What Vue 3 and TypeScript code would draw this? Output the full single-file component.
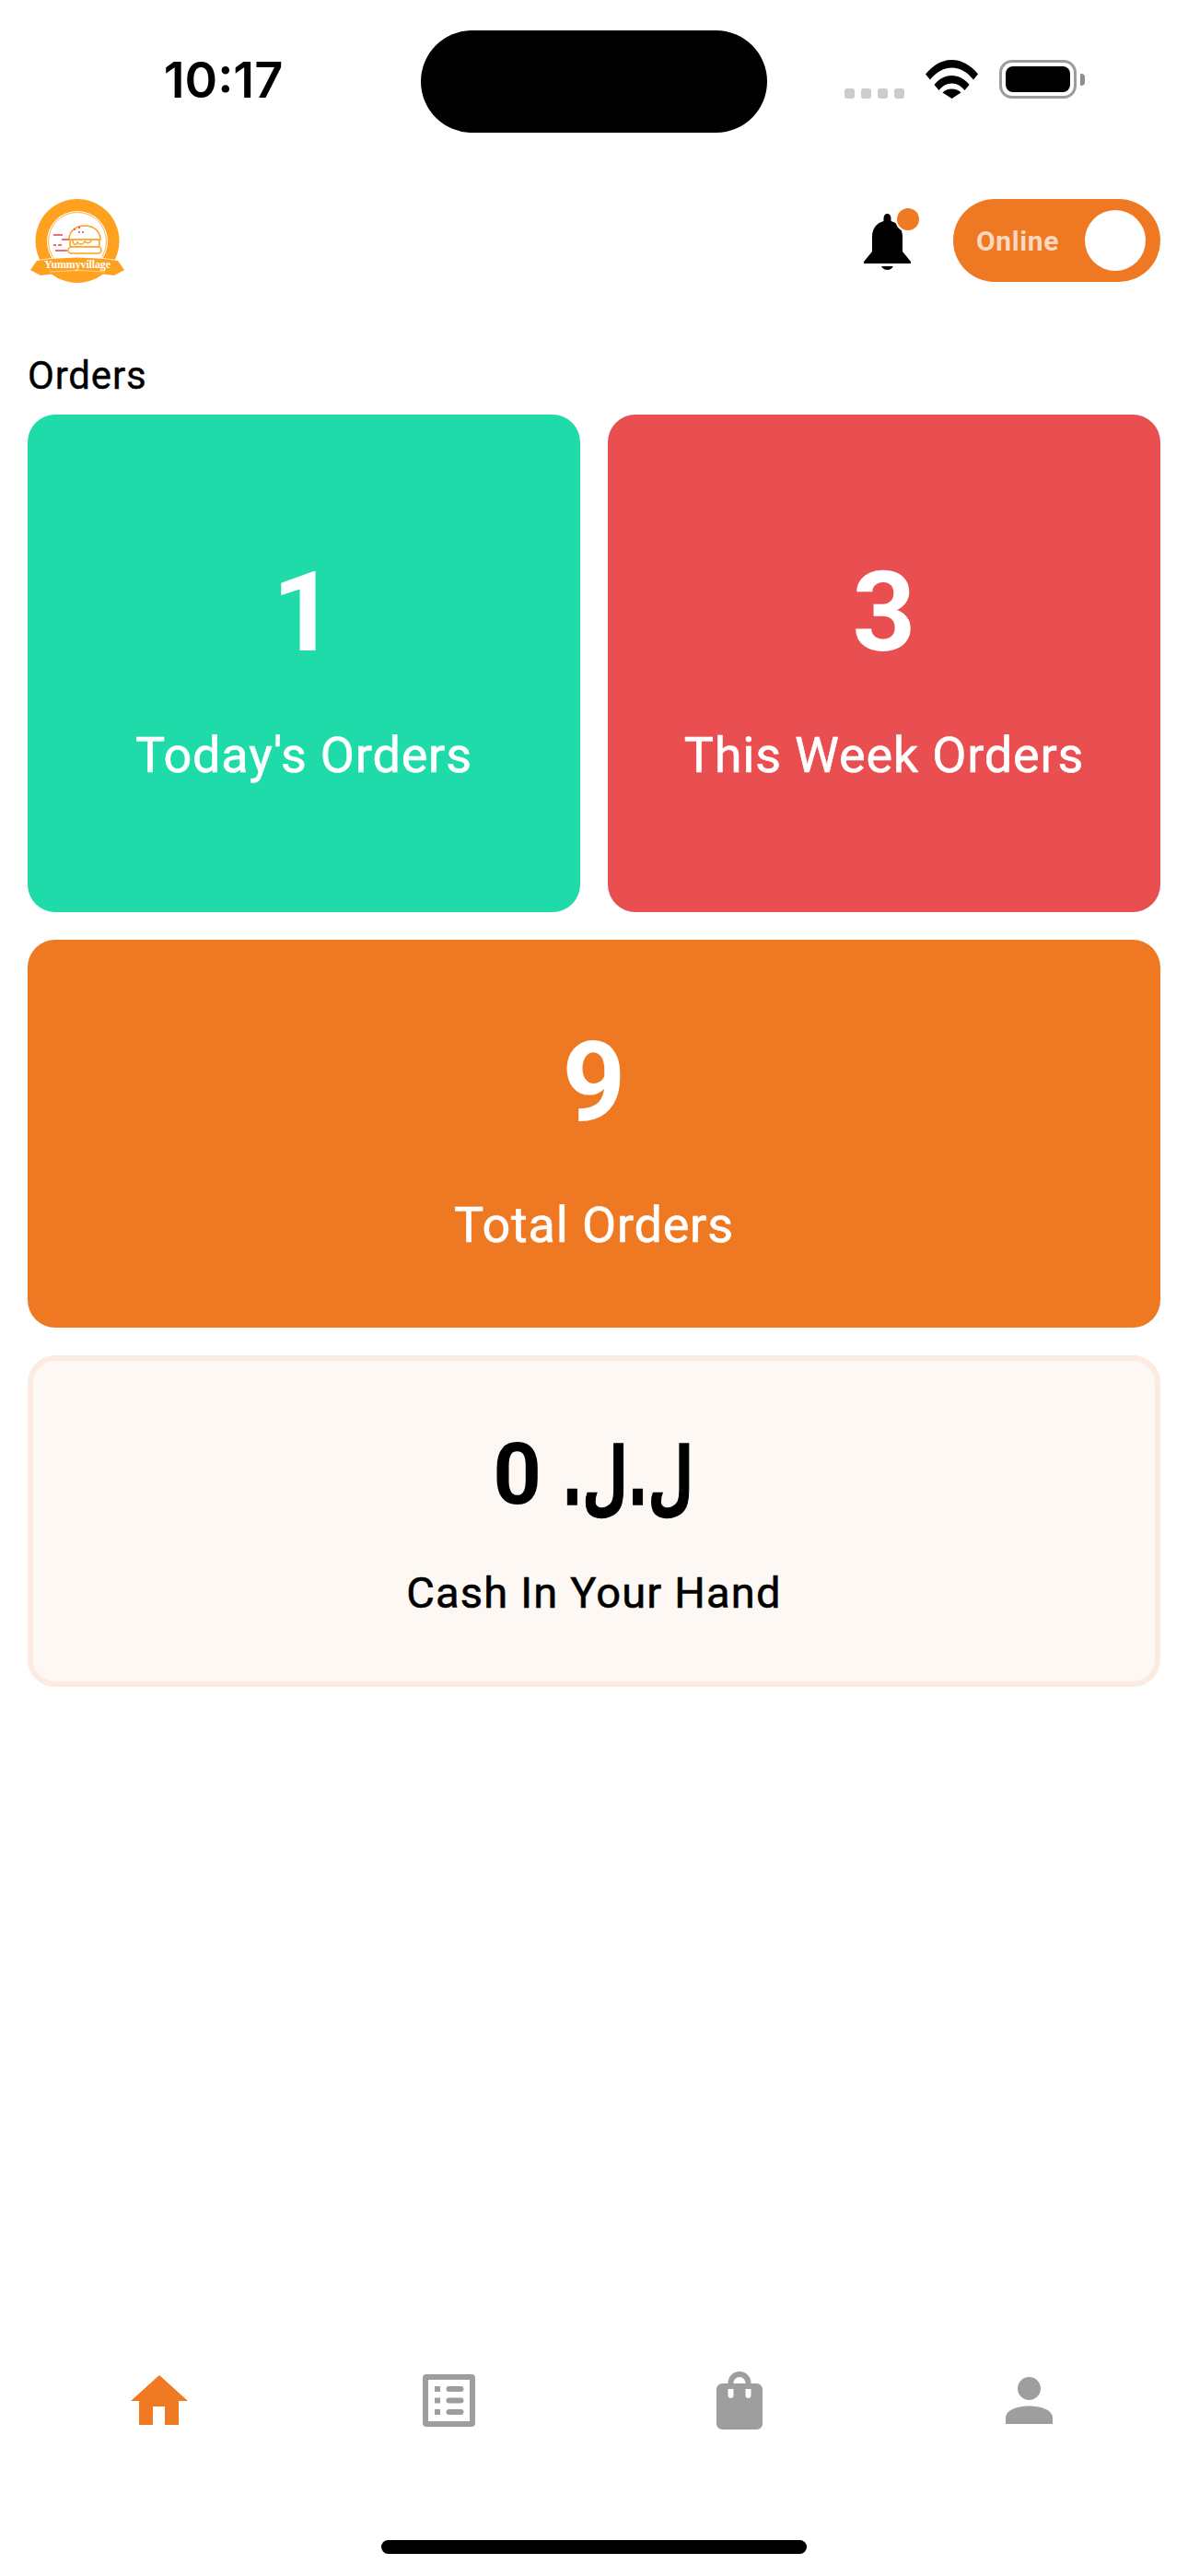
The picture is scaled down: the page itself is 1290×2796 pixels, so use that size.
<script setup lang="ts">
interface OrderCard {
  value: string
  label: string
  tone: string
}

const topCards: OrderCard[] = [
  { value: '1', label: "Today's Orders", tone: 'green' },
  { value: '3', label: 'This Week Orders', tone: 'red' },
]
const totalCard: OrderCard = { value: '9', label: 'Total Orders', tone: 'orange' }
const signalDots = [0, 1, 2, 3]
</script>

<template>
  <div class="screen">
    <!-- status bar -->
    <div class="status-bar">
      <div class="time-box"><span class="time">10:17</span></div>
      <div class="island"></div>
      <div class="status-icons">
        <div class="signal">
          <span v-for="d in signalDots" :key="d" class="signal-dot"></span>
        </div>
        <svg class="wifi" width="57" height="42" viewBox="0 0 57 42">
          <path d="M0 15.500C7.500 6 17.500 0 28.500 0S49.500 6 57 15.500L52 21.500C45.500 13.500 37.500 8.500 28.500 8.500S11.500 13.500 5 21.500Z" fill="#000" />
          <path d="M9.500 27C14 21 21 17 28.500 17S43 21 47.500 27L42.500 33C39 28.500 34 25.500 28.500 25.500S18 28.500 14.500 33Z" fill="#000" />
          <path d="M18.500 35.500C21 33 24.500 31.500 28.500 31.500S36 33 38.500 35.500L28.500 42Z" fill="#000" />
        </svg>
        <div class="battery">
          <div class="battery-fill"></div>
          <span class="battery-tip"></span>
        </div>
      </div>
    </div>

    <!-- header -->
    <div class="top-row">
      <svg class="logo" width="103" height="91" viewBox="0 0 103 91">
        <circle cx="52" cy="45.500" r="45.500" fill="#fea11f" />
        <circle cx="52" cy="46" r="33" fill="#fff" />
        <circle cx="52" cy="46" r="31.500" fill="none" stroke="#fea11f" stroke-width="0.800" />
        <g fill="#fff" stroke="#fea11f" stroke-width="1.500">
          <path d="M43 44C43 35 50 29 60 29S77 35 77 44Z" />
          <rect x="44" y="44" width="32" height="8" rx="3" />
          <rect x="42" y="52" width="36" height="7" rx="3.500" />
          <path d="M47 44C47 50 51 51 52 47C55 50 58 50 60 46C63 49 66 48 68 44" fill="none" />
        </g>
        <g stroke="#ee3a4a" stroke-width="1.300">
          <path d="M26 39H36M35 44H43M26 50H29M31 50H35M28 56H41" />
          <path d="M48 33H50M53 31H55M53 36H55M57 36H59" />
        </g>
        <path d="M8 67Q52 60 96 67L103 77L92 83Q52 76 12 83L1 77Z" fill="#fea11f" />
        <path d="M12 66Q52 59 92 66" fill="none" stroke="#fff" stroke-width="0.700" />
        <path d="M22 79Q52 76 82 79" fill="none" stroke="#fff" stroke-width="0.500" />
        <text x="52" y="75" class="logo-text" text-anchor="middle" textLength="72">Yummyvillage</text>
      </svg>

      <div class="top-actions">
        <div class="bell-wrap">
          <svg width="51" height="61" viewBox="0 0 51 61">
            <path d="M25.500 0C28 0 29.500 2 29.500 5V8C37 10 42 16 42 25V41L51 52V55H0V52L9 41V25C9 16 14 10 21.500 8V5C21.500 2 23 0 25.500 0Z" fill="#000" />
            <path d="M18.500 54H32.500C32.500 58 29.500 61 25.500 61S18.500 58 18.500 54Z" fill="#000" />
            <rect x="0" y="54" width="51" height="3" fill="#fff" />
          </svg>
          <span class="bell-dot"></span>
        </div>
        <div class="toggle">
          <span class="toggle-label">Online</span>
          <span class="toggle-knob"></span>
        </div>
      </div>
    </div>

    <!-- orders -->
    <div class="content">
      <p class="section-title">Orders</p>
      <div class="card-row">
        <div v-for="card in topCards" :key="card.label" class="card" :class="card.tone">
          <span class="card-value">{{ card.value }}</span>
          <span class="card-label">{{ card.label }}</span>
        </div>
      </div>
      <div class="card total" :class="totalCard.tone">
        <span class="card-value">{{ totalCard.value }}</span>
        <span class="card-label">{{ totalCard.label }}</span>
      </div>
      <div class="card cash">
        <div class="cash-value">
          <span>0</span>
          <span class="cash-currency" dir="rtl">ل.ل.</span>
        </div>
        <span class="cash-label">Cash In Your Hand</span>
      </div>
    </div>

    <!-- bottom tabs -->
    <div class="tab-bar">
      <div class="tab">
        <svg width="62" height="54" viewBox="0 0 62 54">
          <path d="M31 0L62 28H52V54H37V34H24V54H9V28H0Z" fill="#f07a24" />
        </svg>
      </div>
      <div class="tab">
        <svg width="57" height="57" viewBox="0 0 57 57">
          <rect x="3" y="3" width="51" height="51" rx="1" fill="none" stroke="#9e9e9e" stroke-width="6" />
          <path d="M13 13H19V19H13ZM13 25.500H19V31.500H13ZM13 38H19V44H13Z" fill="#9e9e9e" />
          <rect x="25.500" y="13" width="19" height="6" rx="3" fill="#9e9e9e" />
          <rect x="25.500" y="25.500" width="19" height="6" rx="3" fill="#9e9e9e" />
          <rect x="25.500" y="38" width="19" height="6" rx="3" fill="#9e9e9e" />
        </svg>
      </div>
      <div class="tab">
        <svg width="50" height="63" viewBox="0 0 50 63">
          <path d="M12.500 13V12.500C12.500 5.500 18 0 25 0S37.500 5.500 37.500 12.500V13H43.500C47 13 50 16 50 19V57C50 60 47 63 43.500 63H6.500C3 63 0 60 0 57V19C0 16 3 13 6.500 13ZM18.500 13H31.500V12.500C31.500 9 28.500 6 25 6S18.500 9 18.500 12.500ZM12.500 19V26C12.500 28 14 29 15.500 29S18.500 28 18.500 26V19ZM31.500 19V26C31.500 28 33 29 34.500 29S37.500 28 37.500 26V19Z" fill="#9e9e9e" fill-rule="evenodd" />
        </svg>
      </div>
      <div class="tab">
        <svg width="51" height="51" viewBox="0 0 51 51">
          <circle cx="25.500" cy="12.500" r="12.500" fill="#9e9e9e" />
          <path d="M0 51V44C0 36 13 31.500 25.500 31.500S51 36 51 44V51Z" fill="#9e9e9e" />
        </svg>
      </div>
    </div>

    <div class="home-indicator"></div>
  </div>
</template>

<style scoped>
.screen {
  width: 1290px;
  height: 2796px;
  background: #fff;
  display: flex;
  flex-direction: column;
  font-family: Roboto, "Liberation Sans", sans-serif;
  color: #000;
  overflow: hidden;
}

.status-bar {
  display: flex;
  align-items: flex-start;
  height: 216px;
  padding-top: 33px;
  box-sizing: border-box;
}
.time-box {
  width: 457px;
  padding-top: 22px;
  padding-left: 28px;
  text-align: center;
  box-sizing: border-box;
}
.time {
  font-family: Inter, Roboto, sans-serif;
  font-size: 54px;
  line-height: 64px;
  font-weight: 600;
}
.island {
  width: 376px;
  height: 111px;
  background: #000;
  border-radius: 56px;
}
.status-icons {
  display: flex;
  align-items: flex-end;
  height: 42px;
  margin-top: 32px;
  margin-left: 84px;
}
.signal {
  display: flex;
  gap: 7px;
}
.signal-dot {
  width: 11px;
  height: 11px;
  border-radius: 3px;
  background: #ccc;
}
.wifi {
  margin-left: 23px;
}
.battery {
  position: relative;
  width: 84px;
  height: 42px;
  margin-left: 23px;
  box-sizing: border-box;
  border: 3px solid #9c9c9c;
  border-radius: 14px;
  padding: 4px;
}
.battery-fill {
  height: 100%;
  background: #000;
  border-radius: 8px;
}
.battery-tip {
  position: absolute;
  right: -12px;
  top: 12px;
  width: 5px;
  height: 13px;
  background: #8e8e8e;
  border-radius: 0 4px 4px 0;
}

.top-row {
  display: flex;
  align-items: center;
  justify-content: space-between;
  height: 90px;
  padding: 0 30px 0 32px;
}
.logo {
  display: block;
}
.logo-text {
  font-family: "Liberation Serif", serif;
  font-size: 12px;
  font-weight: 700;
  fill: #fff;
}
.top-actions {
  display: flex;
  align-items: center;
}
.bell-wrap {
  position: relative;
  width: 51px;
  height: 61px;
  margin-top: 2px;
  margin-right: 46px;
}
.bell-wrap svg {
  display: block;
}
.bell-dot {
  position: absolute;
  left: 36px;
  top: -6px;
  width: 24px;
  height: 24px;
  background: #f07a24;
  border-radius: 50%;
  box-shadow: 0 0 0 2px #fff;
}
.toggle {
  width: 225px;
  height: 90px;
  box-sizing: border-box;
  padding: 0 16px 0 25px;
  background: #ef7923;
  border-radius: 45px;
  display: flex;
  align-items: center;
  justify-content: space-between;
}
.toggle-label {
  font-size: 30px;
  font-weight: 700;
  color: #fbd7bf;
  letter-spacing: 0.6px;
}
.toggle-knob {
  width: 66px;
  height: 66px;
  background: #fff;
  border-radius: 50%;
}

.content {
  padding: 0 30px;
  display: flex;
  flex-direction: column;
  gap: 30px;
}
.section-title {
  margin: 78px 0 -12px;
  font-size: 42px;
  line-height: 48px;
  letter-spacing: 0.8px;
  -webkit-text-stroke: 0.4px #000;
}
.card-row {
  display: grid;
  grid-template-columns: 1fr 1fr;
  gap: 30px;
}
.card {
  border-radius: 30px;
  display: flex;
  flex-direction: column;
  align-items: center;
  justify-content: center;
  box-sizing: border-box;
  color: #fff;
  height: 540px;
  padding-top: 6px;
}
.card.total {
  height: 421px;
}
.green {
  background: #1fdaa9;
}
.red {
  background: #e94e50;
}
.orange {
  background: #ef7923;
}
.card-value {
  font-size: 120px;
  line-height: 140px;
  font-weight: 700;
}
.card-label {
  margin-top: 53px;
  font-size: 54px;
  line-height: 64px;
  letter-spacing: 0.8px;
  -webkit-text-stroke: 0.6px #fff;
}
.card.cash {
  height: 360px;
  padding-top: 0;
  border: 6px solid #fcebe0;
  background: #fdf8f4;
  color: #000;
}
.cash-value {
  display: flex;
  align-items: center;
  gap: 21px;
  font-size: 92px;
  line-height: 110px;
  font-weight: 700;
}
.cash-currency {
  display: inline-block;
  font-family: "DejaVu Sans", sans-serif;
  white-space: nowrap;
  margin: 0 -42px;
  transform: translateY(3px) scale(0.62, 0.95);
  -webkit-text-stroke: 1.5px #000;
}
.cash-label {
  margin-top: 45px;
  font-size: 47px;
  line-height: 56px;
  letter-spacing: 1.2px;
  -webkit-text-stroke: 0.6px #000;
}

.tab-bar {
  margin-top: auto;
  padding: 0 15px;
  display: grid;
  grid-template-columns: repeat(4, 1fr);
  height: 70px;
}
.tab {
  display: flex;
  align-items: center;
  justify-content: center;
}
.home-indicator {
  width: 462px;
  height: 15px;
  margin: 117px auto 24px;
  background: #000;
  border-radius: 8px;
}
</style>
